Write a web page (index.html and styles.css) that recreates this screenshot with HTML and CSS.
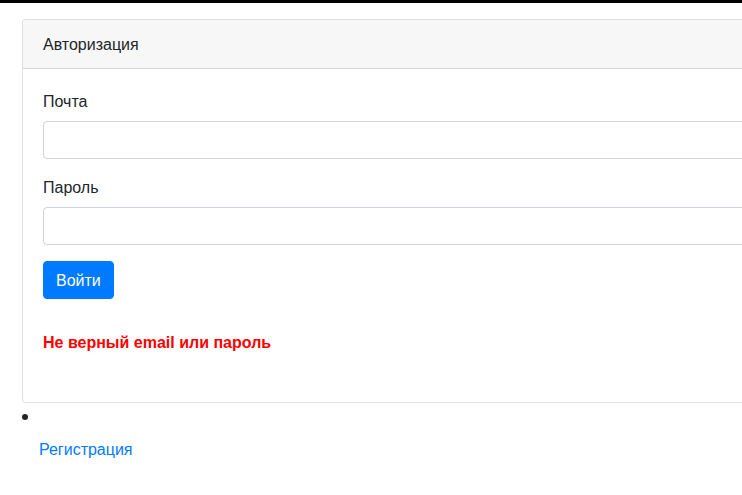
FILE: index.html
```html
<!DOCTYPE html>
<html lang="ru">
<head>
<meta charset="utf-8">
<title>Авторизация</title>
<link rel="stylesheet" href="styles.css">
</head>
<body>
<div class="topbar"></div>
<div class="page">
  <div class="card">
    <div class="card-header">Авторизация</div>
    <div class="card-body">
      <form class="form">
        <div class="form-group">
          <label class="label" for="email">Почта</label>
          <input class="input" id="email" type="email">
        </div>
        <div class="form-group">
          <label class="label" for="password">Пароль</label>
          <input class="input" id="password" type="password">
        </div>
        <button class="btn" type="button">Войти</button>
      </form>
      <p class="error">Не верный email или пароль</p>
    </div>
  </div>
  <ul class="links">
    <li class="links-item links-item--bullet"></li>
    <li class="links-item links-item--plain"><a class="link" href="#">Регистрация</a></li>
  </ul>
</div>
</body>
</html>
```
FILE: styles.css
```css
html, body {
  margin: 0;
  padding: 0;
  background: #fff;
}
body {
  font-family: "Liberation Sans", Arial, sans-serif;
  font-size: 16px;
  line-height: 24px;
  color: #212529;
}
.topbar {
  height: 3px;
  background: #000;
}
.page {
  padding: 16px 0 0 22px;
  overflow: hidden;
}
.card {
  border: 1px solid rgba(0, 0, 0, 0.125);
  border-radius: 4px;
  margin-right: -60px;
  background: #fff;
}
.card-header {
  padding: 13px 20px 11px;
  background: #f7f7f7;
  border-bottom: 1px solid rgba(0, 0, 0, 0.125);
  border-radius: 3px 3px 0 0;
}
.card-body {
  padding: 20px;
}
.form {
  margin: 0;
}
.form-group {
  margin-bottom: 16px;
}
.label {
  display: block;
  padding-top: 1px;
  margin-bottom: 7px;
}
.input {
  display: block;
  box-sizing: border-box;
  width: 100%;
  height: 38px;
  padding: 6px 12px;
  border: 1px solid #ced4da;
  border-radius: 4px;
  font: inherit;
  background: #fff;
}
.btn {
  display: inline-block;
  height: 38px;
  padding: 7px 12px 5px;
  border: 1px solid #007bff;
  border-radius: 4px;
  background: #007bff;
  color: #fff;
  font: inherit;
  line-height: 24px;
  vertical-align: top;
}
.error {
  margin: 32px 0 27px;
  color: #ff0000;
  font-weight: 700;
}
.links {
  margin: 0;
  padding: 0;
  list-style: none;
}
.links-item--bullet {
  box-sizing: border-box;
  height: 24px;
  padding-top: 11px;
}
.links-item--bullet::before {
  content: "";
  display: block;
  width: 6px;
  height: 6px;
  border-radius: 50%;
  background: #212529;
}
.links-item--plain {
  margin-top: 10px;
  padding: 1px 0 0 17px;
}
.link {
  color: #007bff;
  text-decoration: none;
}
```
